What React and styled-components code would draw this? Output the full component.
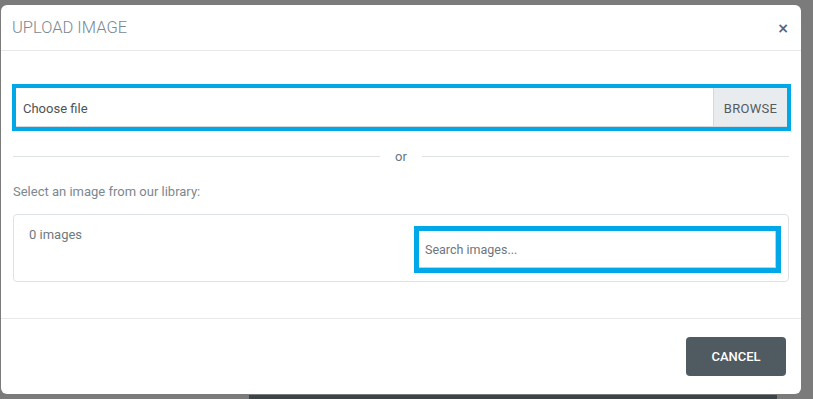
import React from 'react';
import styled, { createGlobalStyle } from 'styled-components';

const GlobalStyle = createGlobalStyle`
  *, *::before, *::after {
    box-sizing: border-box;
  }
  html, body {
    margin: 0;
    padding: 0;
    background: #7b7b7b;
    font-family: Roboto, 'Liberation Sans', Arial, sans-serif;
  }
`;

const Backdrop = styled.div`
  width: 813px;
  height: 399px;
  background: #7b7b7b;
  overflow: hidden;
  display: flex;
  flex-direction: column;
  align-items: flex-start;
`;

const Modal = styled.div`
  margin: 5px 0 0 1px;
  width: 800px;
  height: 389px;
  background: #fff;
  border-radius: 6px;
  display: flex;
  flex-direction: column;
  flex-shrink: 0;
`;

const UnderBar = styled.div`
  margin: 1px 0 0 249px;
  width: 528px;
  height: 5px;
  background: #3d4448;
  flex-shrink: 0;
`;

const Header = styled.div`
  height: 46px;
  flex-shrink: 0;
  border-bottom: 1px solid #e6e8ea;
  display: flex;
  align-items: center;
  justify-content: space-between;
  padding: 0 12px 0 11px;
`;

const Title = styled.h1`
  margin: 0;
  font-size: 16.5px;
  font-weight: 300;
  color: #7b8891;
`;

const Close = styled.button`
  border: 0;
  background: none;
  padding: 0;
  font-size: 14px;
  font-weight: 700;
  color: #5f666b;
  line-height: 1;
  font-family: 'DejaVu Sans', sans-serif;
  cursor: pointer;
`;

const Body = styled.div`
  flex: 1;
  padding: 33px 12px 0 12px;
  display: flex;
  flex-direction: column;
`;

const FileBox = styled.div`
  margin: 0 -2px 0 -1px;
  height: 47px;
  flex-shrink: 0;
  border: 4px solid #00a8e8;
  display: flex;
  background: #fff;
`;

const FileLabel = styled.div`
  flex: 1;
  display: flex;
  align-items: center;
  padding: 2px 0 0 7px;
  font-size: 13px;
  color: #4d5357;
  border-bottom: 1px solid #d4d8dc;
`;

const Browse = styled.div`
  width: 74px;
  display: flex;
  align-items: center;
  justify-content: center;
  padding-top: 2px;
  background: #e9ecef;
  border-left: 1px solid #d4d8dc;
  border-bottom: 1px solid #d4d8dc;
  font-size: 13px;
  letter-spacing: 0.3px;
  color: #555b60;
`;

const Divider = styled.div`
  margin: 18px 0 0;
  display: flex;
  align-items: center;
  gap: 14px;
  &::before,
  &::after {
    content: '';
    flex: 1;
    height: 1px;
    background: #dfe2e5;
  }
`;

const Or = styled.span`
  font-size: 13px;
  color: #6c757d;
  width: 14px;
  text-align: center;
`;

const Hint = styled.p`
  margin: 20px 0 0;
  font-size: 13px;
  color: #7b8891;
`;

const Library = styled.div`
  margin-top: 15px;
  height: 68px;
  flex-shrink: 0;
  border: 1px solid #dee2e6;
  border-radius: 4px;
  display: flex;
  justify-content: space-between;
  align-items: flex-start;
  padding: 11px 7px 0 15px;
`;

const Count = styled.span`
  font-size: 13px;
  color: #6f7a82;
  margin-top: 1px;
`;

const SearchWrap = styled.div`
  width: 367px;
  height: 47px;
  flex-shrink: 0;
  border: 5px solid #00a8e8;
  background: #fff;
  display: flex;
`;

const Search = styled.input`
  flex: 1;
  min-width: 0;
  border: 0;
  border-right: 1px solid #ccc;
  border-bottom: 1px solid #ccc;
  padding: 0 6px;
  font-family: inherit;
  font-size: 12.5px;
  color: #495057;
  outline: none;
  &::placeholder {
    color: #6f767c;
  }
`;

const Footer = styled.div`
  height: 76px;
  flex-shrink: 0;
  border-top: 1px solid #e6e8ea;
  display: flex;
  justify-content: flex-end;
  align-items: flex-start;
  padding: 18px 15px 0 0;
`;

const Cancel = styled.button`
  width: 100px;
  height: 39px;
  border: 0;
  border-radius: 4px;
  background: #4f5a61;
  color: #fff;
  font-family: inherit;
  font-size: 13px;
  font-weight: 500;
  cursor: pointer;
`;

export default function App() {
  return (
    <>
      <GlobalStyle />
      <Backdrop>
        <Modal>
          <Header>
            <Title>UPLOAD IMAGE</Title>
            <Close>×</Close>
          </Header>
          <Body>
            <FileBox>
              <FileLabel>Choose file</FileLabel>
              <Browse>BROWSE</Browse>
            </FileBox>
            <Divider>
              <Or>or</Or>
            </Divider>
            <Hint>Select an image from our library:</Hint>
            <Library>
              <Count>0 images</Count>
              <SearchWrap>
                <Search placeholder="Search images..." />
              </SearchWrap>
            </Library>
          </Body>
          <Footer>
            <Cancel>CANCEL</Cancel>
          </Footer>
        </Modal>
        <UnderBar />
      </Backdrop>
    </>
  );
}
